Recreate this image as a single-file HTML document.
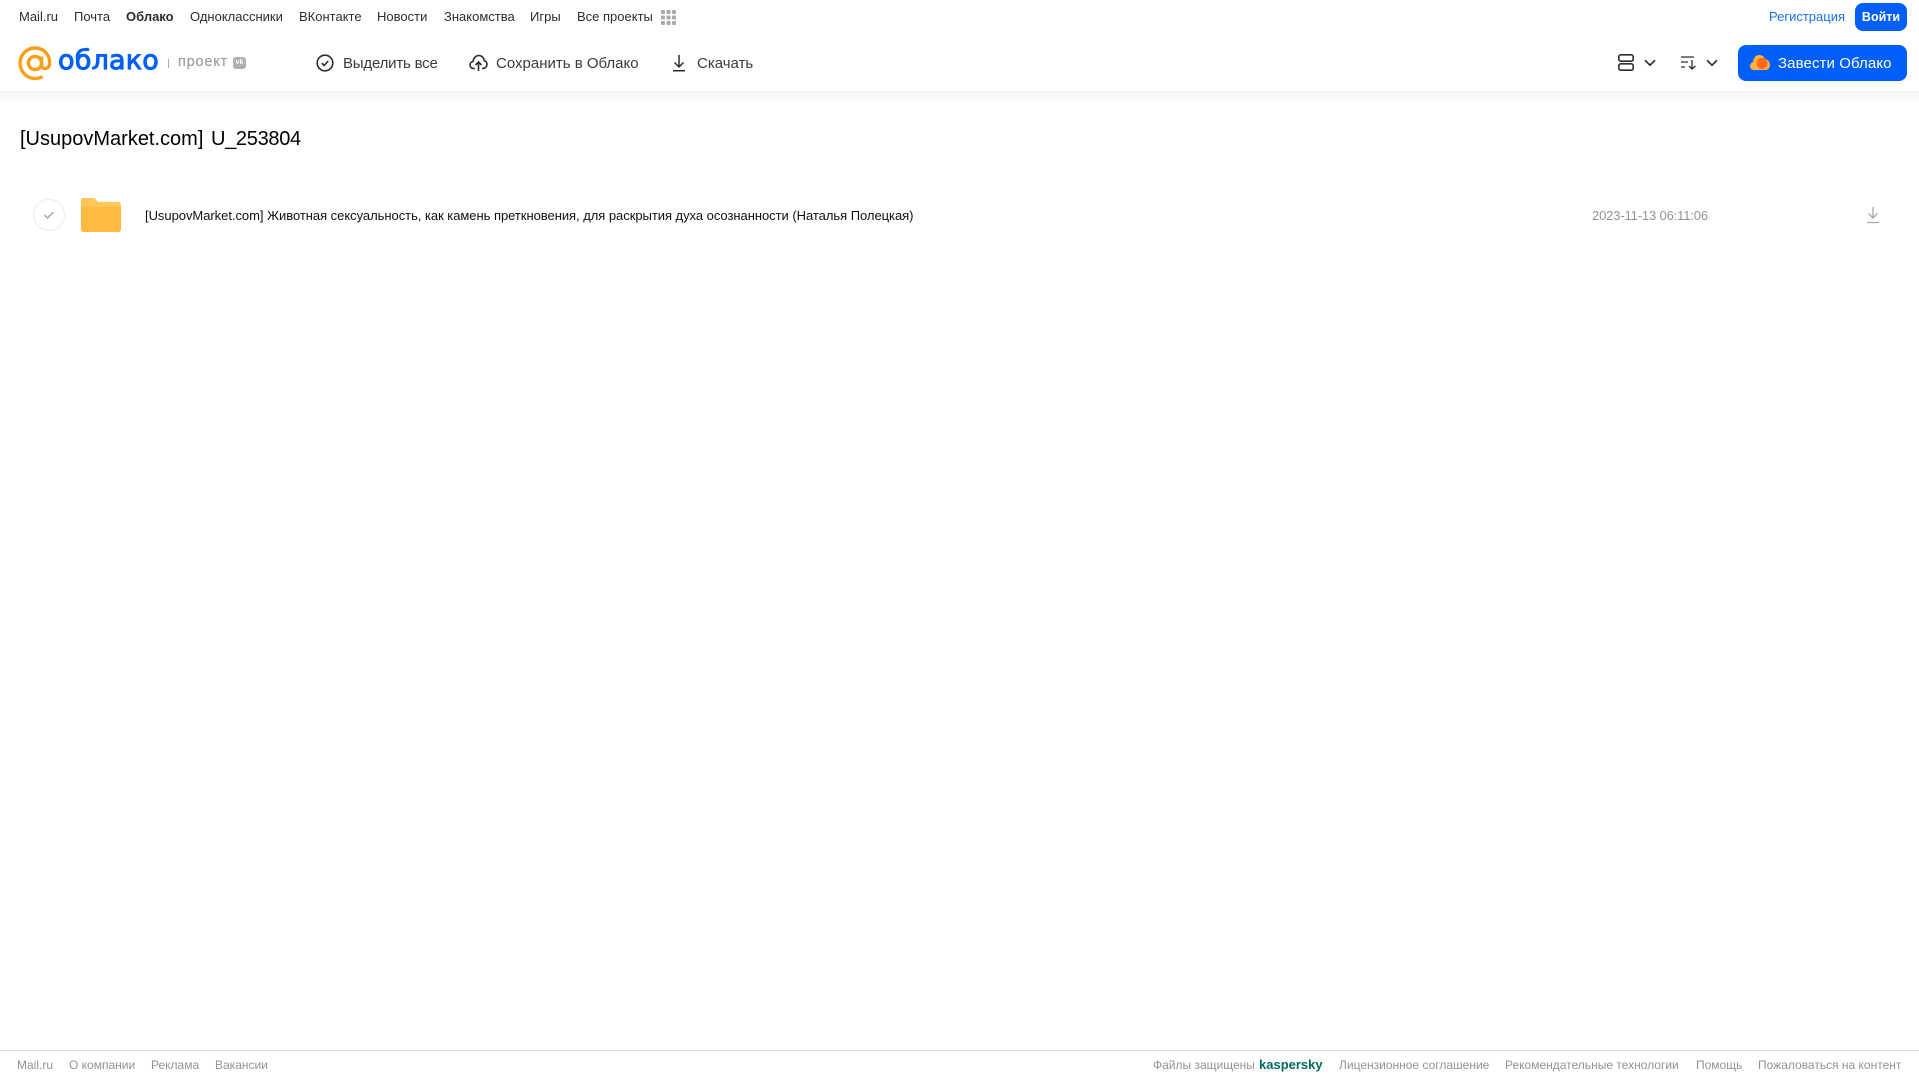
<!DOCTYPE html>
<html lang="ru"><head><meta charset="utf-8"><title>Облако</title>
<style>
html,body{margin:0;padding:0;background:#fff}
body{position:relative;width:1919px;height:1079px;overflow:hidden;font-family:"Liberation Sans",Arial,sans-serif;color:#2c2d2e}
.a{position:absolute;white-space:nowrap;line-height:20px}
.n{top:7px;font-size:13px;color:#2c2d2e}
.t{top:54px;font-size:15px;color:#3a3b3c}
.f{top:1055px;font-size:12px;color:#919399}
svg{position:absolute;display:block}
</style></head><body>
<div class="a" style="left:0;top:91px;width:1919px;height:14px;background:linear-gradient(#f4f4f5,#fff)"></div>
<div class="a n" style="left:19px">Mail.ru</div>
<div class="a n" style="left:74px">Почта</div>
<div class="a n" style="left:126px;font-weight:bold">Облако</div>
<div class="a n" style="left:190px">Одноклассники</div>
<div class="a n" style="left:299px">ВКонтакте</div>
<div class="a n" style="left:377px">Новости</div>
<div class="a n" style="left:444px">Знакомства</div>
<div class="a n" style="left:530px">Игры</div>
<div class="a n" style="left:577px">Все проекты</div>
<svg style="left:661px;top:10px" width="15" height="15" fill="#a8a9ad"><rect x="0" y="0" width="4" height="4" rx="1"/><rect x="5.5" y="0" width="4" height="4" rx="1"/><rect x="11" y="0" width="4" height="4" rx="1"/><rect x="0" y="5.5" width="4" height="4" rx="1"/><rect x="5.5" y="5.5" width="4" height="4" rx="1"/><rect x="11" y="5.5" width="4" height="4" rx="1"/><rect x="0" y="11" width="4" height="4" rx="1"/><rect x="5.5" y="11" width="4" height="4" rx="1"/><rect x="11" y="11" width="4" height="4" rx="1"/></svg>
<div class="a n" style="left:1769px;color:#1a6fe8">Регистрация</div>
<div class="a" style="left:1855px;top:3px;width:52px;height:28px;line-height:28px;background:#005ff9;border-radius:8px;color:#fff;font-size:12.5px;font-weight:bold;text-align:center">Войти</div>

<svg style="left:18px;top:46px" width="34" height="35" viewBox="0 0 34 35" fill="none" stroke="#f9a01b" stroke-width="3.4"><circle cx="17" cy="17" r="6.6"/><path d="M23.6 10.5v8.5c0 5 7.6 5 8-1.5C32 8.500 25.500 2 17 2 8.700 2 2 8.700 2 17s6.700 15.500 15 15.500c3 0 5.500-.7 7.500-2"/></svg>
<div class="a" style="left:58px;top:43px;font-size:27px;line-height:36px;font-family:'DejaVu Sans',sans-serif;color:#005ff9;letter-spacing:.2px;-webkit-text-stroke:1px #005ff9">облако</div>
<div class="a" style="left:168px;top:59px;width:1px;height:9px;background:#aaa"></div>
<div class="a" style="left:178px;top:52px;font-size:14.5px;color:#a0a2a6;letter-spacing:.8px;-webkit-text-stroke:.3px #a0a2a6">проект</div>
<div class="a" style="left:233px;top:57px;width:13px;height:12px;border-radius:3px;background:#aeb0b4;color:#fff;font-size:7px;line-height:12px;font-weight:bold;text-align:center">vk</div>

<svg style="left:316px;top:54px" width="18" height="18" viewBox="0 0 18 18" fill="none" stroke="#2c2d2e" stroke-width="1.6"><circle cx="9" cy="9" r="7.800"/><path d="M5.800 9.200l2.300 2.300 4.200-4.500"/></svg>
<div class="a t" style="left:343px;letter-spacing:-.2px">Выделить все</div>
<svg style="left:469px;top:54px" width="19" height="18" viewBox="0 0 19 18" fill="none" stroke="#2c2d2e" stroke-width="1.600"><path d="M6 14.500H4.500C2.500 14.500 1 13 1 11c0-1.800 1.300-3.200 3-3.500C4.500 4 6.800 1.500 9.800 1.500c3 0 5.200 2.300 5.500 5.200 1.700.4 2.900 2.200 2.700 4-.2 2-1.800 3.800-4 3.800H13"/><path d="M9.500 17V8.500M6.500 11l3-3 3 3"/></svg>
<div class="a t" style="left:496px">Сохранить в Облако</div>
<svg style="left:671px;top:54px" width="16" height="18" viewBox="0 0 16 18" fill="none" stroke="#2c2d2e" stroke-width="1.500"><path d="M8 1v11.500M3.500 8.500L8 13l4.500-4.500M2 16.800h12"/></svg>
<div class="a t" style="left:697px">Скачать</div>

<svg style="left:1618px;top:54px" width="16" height="17" viewBox="0 0 16 17" fill="none" stroke="#2c2d2e" stroke-width="1.600"><rect x=".8" y=".8" width="14.400" height="6.400" rx="2"/><rect x=".8" y="9.800" width="14.400" height="6.400" rx="2"/></svg>
<svg style="left:1644px;top:59px" width="12" height="8" viewBox="0 0 12 8" fill="none" stroke="#2c2d2e" stroke-width="1.700"><path d="M1 1.200l5 5 5-5"/></svg>
<svg style="left:1681px;top:56px" width="16" height="14" viewBox="0 0 16 14" fill="none" stroke="#2c2d2e" stroke-width="1.300"><path d="M0 1h13M0 6h7M0 11h4M11 4v9M8 10l3 3 3.500-3"/></svg>
<svg style="left:1706px;top:59px" width="12" height="8" viewBox="0 0 12 8" fill="none" stroke="#2c2d2e" stroke-width="1.700"><path d="M1 1.200l5 5 5-5"/></svg>
<div class="a" style="left:1738px;top:45px;width:169px;height:36px;background:#005ff9;border-radius:8px"></div>
<svg style="left:1750px;top:54px" width="20" height="17" viewBox="0 0 20 17"><path fill="#ffb340" d="M4 16C1.700 16 0 14.300 0 12c0-2 1.300-3.500 3-3.900C3.300 4 6 1 9 1c3 0 5 1.500 6 4 2.700.3 5 3 5 6 0 3-2 5-5 5z"/><circle cx="12" cy="9.500" r="5.500" fill="#ff6a1f"/></svg>
<div class="a" style="left:1778px;top:54px;font-size:15px;color:#fff;letter-spacing:.1px">Завести Облако</div>

<div class="a" style="left:20px;top:127px;font-size:20px;line-height:24px;color:#000">[UsupovMarket.com] <span style="margin-left:2px;letter-spacing:-.3px">U_253804</span></div>
<div class="a" style="left:33px;top:199px;width:30px;height:30px;border:1px solid #ececee;border-radius:50%"></div>
<svg style="left:43px;top:210px" width="12" height="10" viewBox="0 0 12 10" fill="none" stroke="#a5a7ab" stroke-width="1.500"><path d="M1.500 5l3 3 6-6"/></svg>
<svg style="left:81px;top:198px" width="40" height="34" viewBox="0 0 41 35" preserveAspectRatio="none"><path fill="#ffc859" d="M2 0h10c2 0 3 1 4 2.500L17.500 4H38a3 3 0 0 1 3 3v25a3 3 0 0 1-3 3H3a3 3 0 0 1-3-3V2a2 2 0 0 1 2-2z"/><path fill="#ffbb3f" d="M0 9h41v23a3 3 0 0 1-3 3H3a3 3 0 0 1-3-3z"/></svg>
<div class="a" style="left:145px;top:206px;font-size:13px;color:#111;letter-spacing:-.04px">[UsupovMarket.com] Животная сексуальность, как камень преткновения, для раскрытия духа осознанности (Наталья Полецкая)</div>
<div class="a" style="left:1592px;top:206px;font-size:13px;color:#919399;letter-spacing:-.15px">2023-11-13 06:11:06</div>
<svg style="left:1866px;top:206px" width="14" height="18" viewBox="0 0 14 18" fill="none" stroke="#a5a7ab" stroke-width="1.300"><path d="M7 1v11M2.500 7.500L7 12l4.500-4.500M1 16.500h12"/></svg>

<div class="a" style="left:0;top:1050px;width:1919px;height:1px;background:#dcdcdc"></div>
<div class="a f" style="left:17px">Mail.ru</div>
<div class="a f" style="left:69px">О компании</div>
<div class="a f" style="left:151px">Реклама</div>
<div class="a f" style="left:215px">Вакансии</div>
<div class="a f" style="left:1153px">Файлы защищены</div>
<div class="a f" style="left:1259px;color:#006d5c;font-weight:bold;font-size:13px">kaspersky</div>
<div class="a f" style="left:1339px">Лицензионное соглашение</div>
<div class="a f" style="left:1505px">Рекомендательные технологии</div>
<div class="a f" style="left:1696px">Помощь</div>
<div class="a f" style="left:1758px">Пожаловаться на контент</div>
</body></html>
